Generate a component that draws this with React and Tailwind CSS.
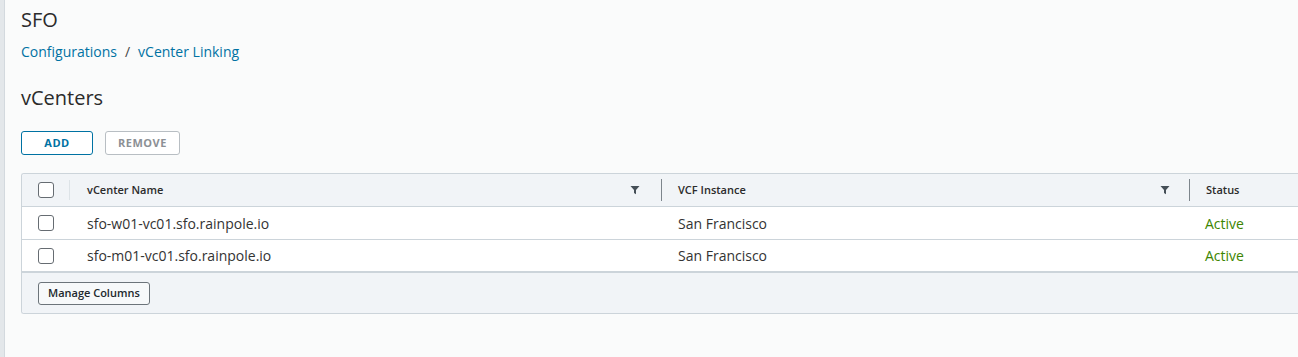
import { useState } from "react";

const rows = [
  { name: "sfo-w01-vc01.sfo.rainpole.io", instance: "San Francisco", status: "Active" },
  { name: "sfo-m01-vc01.sfo.rainpole.io", instance: "San Francisco", status: "Active" },
];

function Checkbox() {
  return (
    <span className="block h-[16px] w-[16px] rounded-[3px] border border-[#666c72] bg-white" />
  );
}

function FilterIcon() {
  return (
    <svg width="10" height="10" viewBox="0 0 10 10" className="text-[#454f57]">
      <path d="M0.5 1h9L6 5v4.2L4 8V5z" fill="currentColor" />
    </svg>
  );
}

export default function App() {
  const [data] = useState(rows);

  return (
    <div
      className="flex h-[357px] w-[1298px] overflow-hidden bg-[#fafbfb] text-[#333]"
      style={{ fontFamily: '"Open Sans", "Noto Sans", sans-serif' }}
    >
      <div className="w-[5px] shrink-0 border-r border-[#d3d9de] bg-[#e3e7ea]" />

      <div className="flex-1 pl-[16px] pt-[7px]">
        <h1 className="text-[20px] font-normal leading-[26px] text-[#2b2b2b]">SFO</h1>

        <nav className="mt-[9px] flex items-center gap-[8px] text-[14px] leading-[20px]">
          <span className="text-[#0072a3]">Configurations</span>
          <span className="text-[#454545]">/</span>
          <span className="text-[#0072a3]">vCenter Linking</span>
        </nav>

        <h2 className="mt-[22px] text-[20px] font-normal leading-[28px] text-[#2b2b2b]">vCenters</h2>

        <div className="mt-[19px] flex gap-[12px]">
          <button className="h-[24px] w-[72px] rounded-[3px] border border-[#0072a3] bg-white text-[11px] font-bold tracking-[0.5px] text-[#0072a3]">
            ADD
          </button>
          <button className="h-[24px] w-[75px] rounded-[3px] border border-[#b8bec3] bg-white text-[11px] font-bold tracking-[0.5px] text-[#8c9095]">
            REMOVE
          </button>
        </div>

        <div className="mt-[18px] overflow-hidden rounded-l-[3px] border-y border-l border-[#ccd4da] bg-white">
          <div className="flex h-[33px] items-center border-b border-[#ccd4da] bg-[#f1f4f7] text-[11px] font-semibold text-[#2b2b2b]">
            <div className="flex w-[48px] shrink-0 items-center justify-between pl-[16px]">
              <Checkbox />
              <span className="h-[20px] w-px bg-[#dde3e7]" />
            </div>
            <div className="flex w-[591px] shrink-0 items-center justify-between pl-[17px] pr-[21px]">
              <span>vCenter Name</span>
              <FilterIcon />
            </div>
            <span className="h-[22px] w-px bg-[#7d858c]" />
            <div className="flex w-[527px] shrink-0 items-center justify-between pl-[16px] pr-[19px]">
              <span>VCF Instance</span>
              <FilterIcon />
            </div>
            <span className="h-[22px] w-px bg-[#7d858c]" />
            <div className="pl-[16px]">Status</div>
          </div>

          {data.map((r, i) => (
            <div
              key={r.name}
              className={
                i === data.length - 1
                  ? "flex h-[33px] items-center border-b-2 border-[#ccd4da] text-[14px]"
                  : "flex h-[33px] items-center border-b border-[#ccd4da] text-[14px]"
              }
            >
              <div className="w-[48px] shrink-0 pl-[16px]">
                <Checkbox />
              </div>
              <div className="w-[591px] shrink-0 pl-[17px] text-[#333]">{r.name}</div>
              <div className="w-[528px] shrink-0 pl-[17px] text-[#333]">{r.instance}</div>
              <div className="pl-[16px] text-[#3c8500]">{r.status}</div>
            </div>
          ))}

          <div className="flex h-[40px] items-center bg-[#f1f4f7] pl-[16px]">
            <button className="h-[23px] rounded-[3px] border border-[#6c747a] bg-[#f7f9fa] px-[9px] text-[11px] font-semibold text-[#22282d]">
              Manage Columns
            </button>
          </div>
        </div>
      </div>
    </div>
  );
}
